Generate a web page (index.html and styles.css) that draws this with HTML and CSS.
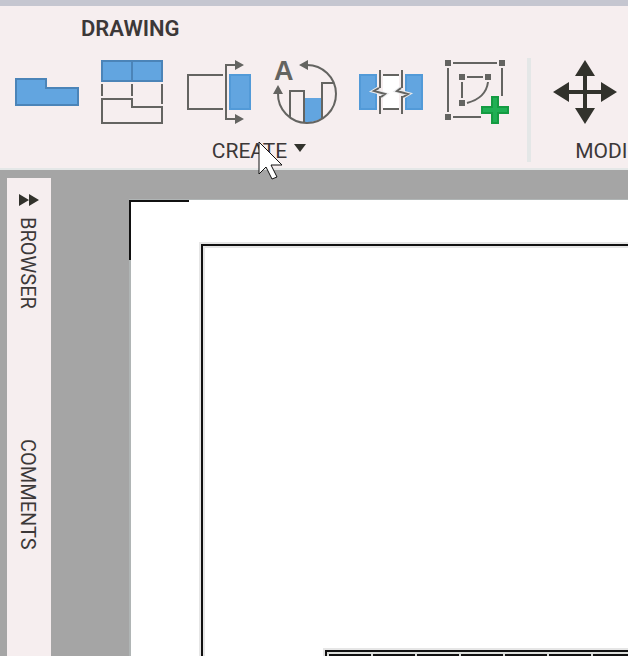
FILE: index.html
```html
<!DOCTYPE html>
<html lang="en">
<head>
  <meta charset="UTF-8" />
  <meta name="viewport" content="width=device-width, initial-scale=1" />
  <title>Drawing</title>
  <link rel="stylesheet" href="styles.css">
</head>
<body>
<header class="toolbar">
  <button class="tab">DRAWING</button>
  <div class="groups">
    <div class="group">
      <div class="tools">
        <button class="tool" aria-label="Base view">
          <svg viewBox="0 0 64 64"><path class="blue" d="M1 19H31V28H63V45H1Z"/></svg>
        </button>
        <button class="tool" aria-label="Projected view">
          <svg viewBox="0 0 64 64">
            <path class="blue" d="M1 1H61V21H1ZM31 1V21"/>
            <path class="line" d="M1 24V36M31 24V36M61 24V44M1 39H31V47H61V63H1Z"/>
          </svg>
        </button>
        <button class="tool" aria-label="Section view">
          <svg viewBox="0 0 64 64">
            <path class="line" d="M36 15H1V49H36M49 5H39V59H49"/>
            <path class="solid" d="M48 0L57 5L48 10ZM48 54L57 59L48 64Z"/>
            <path class="blue light" d="M43 15H63V49H43Z"/>
          </svg>
        </button>
        <button class="tool" aria-label="Detail view">
          <svg viewBox="0 0 64 64">
            <path class="fill" d="M31 38H49V58Q41 63 31 62Z"/>
            <path class="line" d="M17 57V31H31V62M49 58V23H61"/>
            <path class="line" d="M33 5A29 29 0 1 1 5 33"/>
            <path class="solid" d="M26 5L35 0V10ZM5 25L0 34H10Z"/>
            <text x="1" y="20">A</text>
          </svg>
        </button>
        <button class="tool" aria-label="Break view">
          <svg viewBox="0 0 64 64">
            <path class="blue light" d="M1 15H17V49H1ZM47 15H63V49H47Z"/>
            <path class="white" d="M24 14H40V50H24Z"/>
            <path class="line" d="M24 15H40M24 49H40"/>
            <path class="halo" d="M20 28L15 31L26 34L22 37M42 28L38 31L49 34L44 37"/>
            <path class="line" d="M21 10V28M21 36V54M43 10V28M43 36V54"/>
            <path class="line" d="M20 28L15 31L26 34L22 37M42 28L38 31L49 34L44 37"/>
          </svg>
        </button>
        <button class="tool" aria-label="Create sketch">
          <svg viewBox="0 0 64 64">
            <path class="solid" d="M0 0h6v6h-6zM54 0h6v6h-6zM0 54h6v6h-6zM14 14h6v6h-6zM40 14h6v6h-6zM14 40h6v6h-6z"/>
            <path class="line" d="M8 3H52M3 8V52M57 8V36M8 57H36M22 17H38M17 22V38M43 22Q41 38 22 43"/>
            <path class="plus" d="M47 37H53V47H63V53H53V63H47V53H37V47H47Z"/>
          </svg>
        </button>
      </div>
      <button class="menu">CREATE <span class="caret"></span></button>
    </div>
    <div class="separator"></div>
    <div class="group modify">
      <div class="tools">
        <button class="tool" aria-label="Move">
          <svg viewBox="0 0 64 64">
            <path class="dark" d="M32 0L42 16H34V30H48V22L64 32L48 42V34H34V48H42L32 64L22 48H30V34H16V42L0 32L16 22V30H30V16H22Z"/>
          </svg>
        </button>
      </div>
      <button class="menu">MODIFY <span class="caret"></span></button>
    </div>
  </div>
</header>
<main class="workspace">
  <nav class="sidebar">
    <button class="expand" aria-label="Expand">
      <svg viewBox="0 0 20 14"><path class="dark" d="M0 1L10 7L0 13ZM10 1L20 7L10 13Z"/></svg>
    </button>
    <button class="panel">BROWSER</button>
    <button class="panel">COMMENTS</button>
  </nav>
  <section class="sheet">
    <div class="frame">
      <div class="parts">
        <span></span><span></span><span></span><span></span><span></span><span></span><span></span>
      </div>
    </div>
  </section>
</main>
<svg class="cursor" viewBox="0 0 26 40"><path d="M1 1V33L8 26L14 38L19 36L13 24H24Z"/></svg>
</body>
</html>
```
FILE: styles.css
```css
* {
  box-sizing: border-box;
}
body {
  margin: 0;
  height: 100vh;
  display: flex;
  flex-direction: column;
  overflow: hidden;
  font-family: Roboto, "Liberation Sans", sans-serif;
  color: #3c3838;
  background: #a5a5a5;
}
button {
  padding: 0;
  border: none;
  background: none;
  font: inherit;
  color: inherit;
}
svg {
  display: block;
}

/* toolbar */
.toolbar {
  flex: none;
  padding: 10px 0 4px 4px;
  background: #f6eeef;
  border-top: 6px solid #c5c6d0;
  border-bottom: 2px solid #e4e7e7;
}
.tab {
  display: block;
  margin: 0 0 16px 77px;
  font-size: 22px;
  font-weight: 600;
  line-height: 26px;
}
.groups {
  display: flex;
  overflow: hidden;
}
.group {
  flex: none;
  padding-top: 2px;
}
.modify {
  min-width: 168px;
}
.tools {
  display: flex;
}
.tool {
  width: 86px;
  height: 64px;
  padding: 0 11px;
}
.tool svg {
  width: 64px;
  height: 64px;
  overflow: visible;
}
.menu {
  display: flex;
  align-items: center;
  justify-content: center;
  gap: 7px;
  width: 100%;
  margin-top: 14px;
  padding-right: 6px;
  font-size: 21px;
  line-height: 26px;
}
.caret {
  border: 6px solid transparent;
  border-top: 8px solid #32322c;
  border-bottom: none;
  margin-bottom: 6px;
}
.separator {
  flex: none;
  width: 4px;
  margin: 0 11px 2px 7px;
  background: #e4e7e7;
}

/* icons */
.blue {
  fill: #62a5e0;
  stroke: #4b84b8;
  stroke-width: 2;
}
.light {
  stroke: #529ad8;
}
.fill {
  fill: #62a5e0;
}
.line {
  fill: none;
  stroke: #646461;
  stroke-width: 2;
}
.solid {
  fill: #646461;
}
.white {
  fill: #fff;
}
.halo {
  fill: none;
  stroke: #e9eaec;
  stroke-width: 4;
}
.plus {
  fill: #1faf54;
  stroke: #149b42;
  stroke-width: 2;
}
.dark {
  fill: #32322c;
}
.tool text {
  font: bold 27px "Liberation Sans", sans-serif;
  fill: #646461;
}

/* workspace */
.workspace {
  flex: 1;
  min-height: 0;
  display: flex;
  overflow: hidden;
  padding-left: 7px;
}
.sidebar {
  flex: none;
  width: 44px;
  margin-top: 8px;
  padding-top: 15px;
  display: flex;
  flex-direction: column;
  align-items: center;
  background: #f6eeef;
}
.expand svg {
  width: 20px;
  height: 14px;
}
.panel {
  margin: 10px 2px 0 0;
  writing-mode: vertical-rl;
  font-size: 20px;
  line-height: 24px;
}
.panel + .panel {
  margin-top: 130px;
}
.sheet {
  position: relative;
  flex: 1;
  display: flex;
  margin: 29px 0 0 78px;
  padding: 44px 0 0 70px;
  background: #fff;
  border-top: 1px solid #b0b5b5;
  border-left: 2px solid #b0b5b5;
}
/* crop marks in the sheet corner */
.sheet::before,
.sheet::after {
  content: "";
  position: absolute;
  top: 0;
  left: -2px;
  background: #111;
}
.sheet::before {
  width: 60px;
  height: 2px;
}
.sheet::after {
  width: 2px;
  height: 60px;
}
.frame {
  flex: 1;
  min-width: 0;
  display: flex;
  flex-direction: column;
  justify-content: flex-end;
  padding-left: 122px;
  border-top: 2px solid #111;
  border-left: 2px solid #111;
  box-shadow: 0 0 0 2px #e6e6e6, inset 2px 2px #e6e6e6;
}
.parts {
  display: flex;
  height: 6px;
  padding: 2px 0 0 2px;
  gap: 2px;
  overflow: hidden;
  background: #dcdedb;
  border-top: 2px solid #111;
  border-left: 2px solid #111;
  box-shadow: 0 0 0 2px #e6e6e6;
}
.parts span {
  flex: none;
  width: 42px;
  background: #111;
}
.cursor {
  position: absolute;
  left: 258px;
  top: 141px;
  width: 26px;
  height: 40px;
  fill: #fff;
  stroke: #111;
  stroke-width: 1;
}
```
